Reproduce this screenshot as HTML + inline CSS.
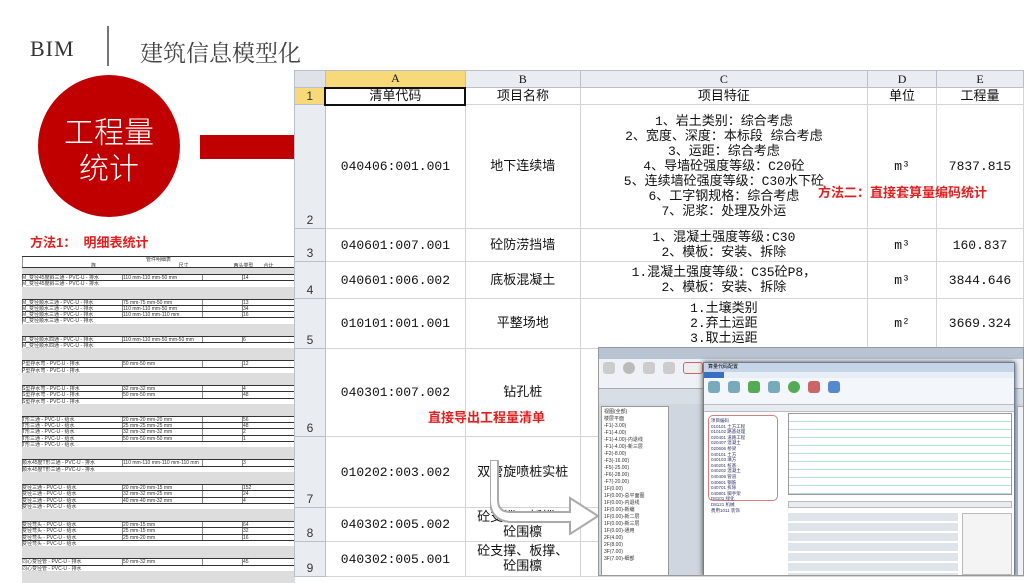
<!DOCTYPE html>
<html><head><meta charset="utf-8"><style>
*{margin:0;padding:0;box-sizing:border-box}
body{width:1024px;height:576px;overflow:hidden;background:#fff;position:relative;font-family:"Liberation Sans","Noto Sans CJK SC",sans-serif}
.a{position:absolute}
.ser{font-family:"Liberation Serif","Noto Serif CJK SC",serif}
table{border-collapse:collapse;table-layout:fixed;position:absolute;left:294px;top:70px;font-family:"Liberation Mono","Noto Sans CJK SC",monospace;font-size:13px;color:#111}
td{border:1px solid #d4d4d4;text-align:center;vertical-align:middle;line-height:15px;padding:0;overflow:hidden}
td.rn{background:#e9ecf1;color:#333;font-size:12px;vertical-align:bottom;text-align:center;border-color:#b9c0c9;font-family:"Liberation Sans",sans-serif}
tr.h td{background:#e9ecf1;height:17px;font-size:12px;border-color:#b9c0c9;font-family:"Liberation Serif",serif}
.sel{background:#f8d97a!important}
.tb{font-size:5px;line-height:6.2px;color:#333;white-space:nowrap}
.ic{display:inline-block;width:12px;height:12px;margin:3px 4px;border-radius:3px}
</style></head><body>
<div class="a ser" style="left:30px;top:36px;font-size:22px;color:#333;letter-spacing:1px">BIM</div>
<div class="a" style="left:107px;top:26px;width:2px;height:40px;background:#777"></div>
<div class="a ser" style="left:140px;top:35px;font-size:23px;color:#444">建筑信息模型化</div>
<div class="a" style="left:38px;top:75px;width:142px;height:142px;border-radius:50%;background:#c00000"></div>
<div class="a" style="left:38px;top:112px;width:142px;text-align:center;color:#fff;font-size:30px;line-height:36px;font-family:'Noto Sans CJK SC',sans-serif;font-weight:300">工程量<br>统计</div>
<div class="a" style="left:200px;top:135px;width:95px;height:24px;background:#c00000"></div>
<div class="a" style="left:30px;top:232px;color:#e02020;font-size:13px;font-weight:bold">方法1：&nbsp;&nbsp;明细表统计</div>
<div class="a" style="left:22px;top:256px;width:273px;height:300px;background:#fff;border-left:1px solid #999"></div>
<div class="a tb" style="left:22px;top:256px;width:273px">
<div style="border:1px solid #333;border-width:1px 0;height:12px;text-align:center;line-height:6px">管件明细表<br><span style="display:inline-block;width:100px">族</span><span style="display:inline-block;width:80px">尺寸</span><span style="display:inline-block;width:40px">两头类型</span>合计</div>
<div style="height:6px;background:#ddd"></div>
<div id="tt"></div>
</div>
<script>
var g=[[["M_变径45度斜三通 - PVC-U - 排水","110 mm-110 mm-50 mm","14"]],
[["M_变径顺水三通 - PVC-U - 排水","75 mm-75 mm-50 mm","13"],["M_变径顺水三通 - PVC-U - 排水","110 mm-110 mm-50 mm","34"],["M_变径顺水三通 - PVC-U - 排水","110 mm-110 mm-110 mm","16"]],
[["M_变径顺水四通 - PVC-U - 排水","110 mm-110 mm-50 mm-50 mm","6"]],
[["P型存水弯 - PVC-U - 排水","50 mm-50 mm","12"]],
[["S型存水弯 - PVC-U - 排水","32 mm-32 mm","4"],["S型存水弯 - PVC-U - 排水","50 mm-50 mm","48"]],
[["T形三通 - PVC-U - 给水","20 mm-20 mm-20 mm","56"],["T形三通 - PVC-U - 给水","25 mm-25 mm-25 mm","48"],["T形三通 - PVC-U - 给水","32 mm-32 mm-32 mm","2"],["T形三通 - PVC-U - 给水","50 mm-50 mm-50 mm","1"]],
[["顺水45度T形三通 - PVC-U - 排水","110 mm-110 mm-110 mm-110 mm","3"]],
[["变径三通 - PVC-U - 给水","20 mm-20 mm-15 mm","152"],["变径三通 - PVC-U - 给水","32 mm-32 mm-25 mm","24"],["变径三通 - PVC-U - 给水","40 mm-40 mm-32 mm","4"]],
[["变径弯头 - PVC-U - 给水","20 mm-15 mm","64"],["变径弯头 - PVC-U - 给水","25 mm-15 mm","32"],["变径弯头 - PVC-U - 给水","25 mm-20 mm","16"]],
[["同心变径管 - PVC-U - 排水","50 mm-32 mm","45"]]];
var h="";g.forEach(function(x){x.forEach(function(r){h+='<div style="height:6.3px;border-top:1px solid #333;display:flex"><span style="width:100px;overflow:hidden">'+r[0]+'</span><span style="width:80px;border-left:1px solid #888">'+r[1]+'</span><span style="width:40px;border-left:1px solid #888"></span><span style="border-left:1px solid #888">'+r[2]+'</span></div>'});h+='<div style="height:6.3px;border-top:1px solid #333">'+x[0][0]+'</div><div style="height:12px;background:#ddd"></div>'});document.getElementById("tt").innerHTML=h;
</script>
<table>
<colgroup><col style="width:31px"><col style="width:140px"><col style="width:115px"><col style="width:288px"><col style="width:69px"><col style="width:87px"></colgroup>
<tr class="h"><td class="rn" style="background:#dfe3e8"></td><td class="sel">A</td><td>B</td><td>C</td><td>D</td><td>E</td></tr>
<tr style="height:17px"><td class="rn sel">1</td><td style="border:2px solid #111">清单代码</td><td>项目名称</td><td>项目特征</td><td>单位</td><td>工程量</td></tr>
<tr style="height:124px"><td class="rn">2</td><td>040406:001.001</td><td>地下连续墙</td><td>1、岩土类别：综合考虑<br>2、宽度、深度：本标段 综合考虑<br>3、运距：综合考虑<br>4、导墙砼强度等级：C20砼<br>5、连续墙砼强度等级：C30水下砼<br>6、工字钢规格：综合考虑<br>7、泥浆：处理及外运</td><td>m³</td><td>7837.815</td></tr>
<tr style="height:33px"><td class="rn">3</td><td>040601:007.001</td><td>砼防涝挡墙</td><td>1、混凝土强度等级:C30<br>2、模板：安装、拆除</td><td>m³</td><td>160.837</td></tr>
<tr style="height:37px"><td class="rn">4</td><td>040601:006.002</td><td>底板混凝土</td><td>1.混凝土强度等级：C35砼P8，<br>2、模板：安装、拆除</td><td>m³</td><td>3844.646</td></tr>
<tr style="height:50px"><td class="rn">5</td><td>010101:001.001</td><td>平整场地</td><td>1.土壤类别<br>2.弃土运距<br>3.取土运距</td><td>m²</td><td>3669.324</td></tr>
<tr style="height:88px"><td class="rn">6</td><td>040301:007.002</td><td>钻孔桩</td><td></td><td></td><td></td></tr>
<tr style="height:71px"><td class="rn">7</td><td>010202:003.002</td><td>双管旋喷桩实桩</td><td></td><td></td><td></td></tr>
<tr style="height:34px"><td class="rn">8</td><td>040302:005.002</td><td>砼支撑、板撑、<br>砼围檩</td><td></td><td></td><td></td></tr>
<tr style="height:35px"><td class="rn">9</td><td>040302:005.001</td><td>砼支撑、板撑、<br>砼围檩</td><td></td><td></td><td></td></tr>
</table>
<div class="a" style="left:818px;top:182px;color:#e02020;font-size:13px;font-weight:bold">方法二：直接套算量编码统计</div>
<div class="a" style="left:428px;top:407px;color:#e02020;font-size:13px;font-weight:bold">直接导出工程量清单</div>
<svg class="a" style="left:490px;top:460px" width="115" height="75"><path d="M8 0 V40 Q8 52 20 52 H80 V38 L108 56 L80 74 V62 H20 Q0 60 0 40 V0 Z" fill="#fff" stroke="#aaa" stroke-width="2"/></svg>
<div class="a" style="left:598px;top:347px;width:426px;height:229px;background:#cfd6df;border:1px solid #999;overflow:hidden">
 <div style="height:11px;background:#b8c4d2"></div>
 <div style="height:30px;background:#eef1f5;border-bottom:1px solid #aaa"><span class="ic" style="background:#ccc"></span><span class="ic" style="background:#bbb;border-radius:50%"></span><span class="ic" style="background:#ccc"></span><span class="ic" style="background:#ccc"></span><span class="ic" style="background:#eee;border:1px solid #c66;width:20px"></span></div>
 <div style="height:15px;background:#d8dee6"></div>
 <div class="a" style="left:2px;top:58px;width:68px;height:170px;background:#fff;border:1px solid #999;font-size:5px;line-height:7px;color:#333;padding:2px">视图(全部)<br>楼层平面<br>-F1(-3.00)<br>-F1(-4.00)<br>-F1(-4.00)-内退线<br>-F1(-4.00)-新三层<br>-F2(-8.00)<br>-F3(-16.00)<br>-F5(-25.00)<br>-F6(-28.00)<br>-F7(-20.00)<br>1F(0.00)<br>1F(0.00)-总平面图<br>1F(0.00)-内退线<br>1F(0.00)-新编<br>1F(0.00)-新二层<br>1F(0.00)-新三层<br>1F(0.00)-通用<br>2F(4.00)<br>2F(8.00)<br>3F(7.00)<br>3F(7.00)-细部</div>
 <div class="a" style="left:104px;top:14px;width:312px;height:214px;background:#fff;border:1px solid #6d7f96;box-shadow:0 0 5px #444">
  <div style="height:9px;background:#c5d4e6;font-size:5px;padding-left:4px">算量代码配置</div>
  <div style="height:6px;background:#e8eef5"><div style="height:6px;background:#3a6fc0;width:20px"></div></div>
  <div style="height:27px;background:#f3f6fa;border-bottom:1px solid #bbb"><span class="ic" style="background:#7ab"></span><span class="ic" style="background:#7ab"></span><span class="ic" style="background:#5a5"></span><span class="ic" style="background:#7ab"></span><span class="ic" style="background:#5a5;border-radius:50%"></span><span class="ic" style="background:#c66"></span><span class="ic" style="background:#58c"></span></div>
  <div style="height:7px;background:#e6ebf1;border-bottom:1px solid #bbb"></div>
  <div class="a" style="left:4px;top:52px;width:70px;height:86px;border:1px solid #d08080;border-radius:5px;font-size:4.5px;line-height:5.6px;color:#336;padding:2px">项目编码<br>010101 土方工程<br>010102 路基处理<br>020401 道路工程<br>020407 混凝土<br>020606 桥梁<br>040101 土方<br>040103 填方<br>040201 桩基<br>040202 混凝土<br>040406 管道<br>040601 钢筋<br>040701 拆除<br>040801 脚手架<br>D8101 绿化<br>D8121 机械<br>费用1011 装饰</div>
  <div class="a" style="left:84px;top:50px;width:224px;height:82px;background:repeating-linear-gradient(#fff 0 7px,#b9dde0 7px 8px);border:1px solid #999"></div>
  <div class="a" style="left:84px;top:138px;width:224px;height:7px;background:#e8ecf0;border:1px solid #bbb"></div>
  <div class="a" style="left:84px;top:150px;width:170px;height:62px;background:repeating-linear-gradient(#dfe4ea 0 8px,#fff 8px 10px)"></div>
  <div class="a" style="left:258px;top:150px;width:50px;height:62px;background:#f4f4f4;border:1px solid #bbb"></div>
 </div>
 <div class="a" style="left:418px;top:58px;width:8px;height:170px;background:#eef1f5;border:1px solid #aaa"></div>
</div>
</body></html>
